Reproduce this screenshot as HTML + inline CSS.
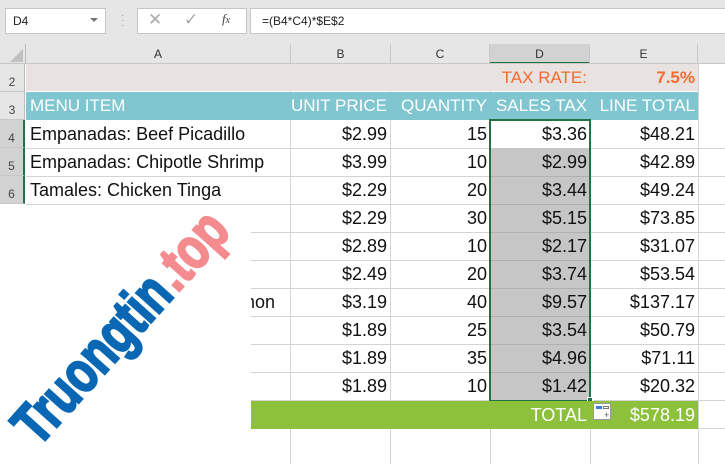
<!DOCTYPE html>
<html><head><meta charset="utf-8"><style>
*{margin:0;padding:0;box-sizing:border-box}
body{width:725px;height:455px;overflow:hidden;background:#fff;font-family:"Liberation Sans",sans-serif;position:relative}
.a{position:absolute}
.c{position:absolute;font-size:18px;line-height:28px;white-space:nowrap;color:#111}
.h{font-size:17px}
.r{text-align:right}
.vl{position:absolute;width:1px;background:#d4d4d4}
.hl{position:absolute;height:1px;background:#d4d4d4}
.rh{position:absolute;left:0;width:25px;background:#e6e6e6;color:#444;font-size:12px;text-align:center;border-bottom:1px solid #c8c8c8;border-right:1px solid #bbb}
.ch{position:absolute;top:44px;height:20px;font-size:12px;color:#333;text-align:center;line-height:20px;border-right:1px solid #c8c8c8;background:#e6e6e6}
</style></head><body>
<div class="a" style="left:0;top:0;width:725px;height:44px;background:#e6e6e6"></div>
<div class="a" style="left:5px;top:8px;width:101px;height:26px;background:#fff;border:1px solid #c6c6c6;font-size:12px;line-height:24px;padding-left:7px;color:#222">D4</div>
<div class="a" style="left:90px;top:18px;width:0;height:0;border-left:4px solid transparent;border-right:4px solid transparent;border-top:4px solid #777"></div>
<div class="a" style="left:121px;top:13px;font-size:10px;color:#999;line-height:5px">·<br>·<br>·</div>
<div class="a" style="left:137px;top:8px;width:110px;height:26px;background:#fff;border:1px solid #c6c6c6"></div>
<div class="a" style="left:148px;top:10px;font-size:17px;color:#aaa">✕</div>
<div class="a" style="left:184px;top:10px;font-size:17px;color:#aaa">✓</div>
<div class="a" style="left:222px;top:11px;font-size:13px;color:#444;font-family:'Liberation Serif',serif;font-style:italic">f<span style="font-size:10px">x</span></div>
<div class="a" style="left:250px;top:8px;width:480px;height:26px;background:#fff;border:1px solid #c6c6c6;font-size:12px;line-height:24px;padding-left:11px;color:#222">=(B4*C4)*$E$2</div>
<div class="a" style="left:0;top:44px;width:26px;height:20px;background:#e6e6e6;border-right:1px solid #bbb"></div>
<div class="a" style="left:10px;top:49px;width:0;height:0;border-left:13px solid transparent;border-bottom:13px solid #c0c0c0"></div>
<div class="ch" style="left:26px;width:265px">A</div>
<div class="ch" style="left:291px;width:100px">B</div>
<div class="ch" style="left:391px;width:99px">C</div>
<div class="ch" style="left:490px;width:100px;background:#d2d2d2;border-bottom:2px solid #217346">D</div>
<div class="ch" style="left:590px;width:108px">E</div>
<div class="ch" style="left:698px;width:30px"></div>
<div class="hl" style="left:0;top:63px;width:725px;background:#c8c8c8"></div>
<div class="vl" style="left:290px;top:64px;height:400px"></div>
<div class="vl" style="left:390px;top:64px;height:400px"></div>
<div class="vl" style="left:490px;top:64px;height:400px"></div>
<div class="vl" style="left:590px;top:64px;height:400px"></div>
<div class="vl" style="left:698px;top:64px;height:400px"></div>
<div class="hl" style="left:26px;top:148px;width:700px"></div>
<div class="hl" style="left:26px;top:176px;width:700px"></div>
<div class="hl" style="left:26px;top:204px;width:700px"></div>
<div class="hl" style="left:26px;top:232px;width:700px"></div>
<div class="hl" style="left:26px;top:260px;width:700px"></div>
<div class="hl" style="left:26px;top:288px;width:700px"></div>
<div class="hl" style="left:26px;top:316px;width:700px"></div>
<div class="hl" style="left:26px;top:344px;width:700px"></div>
<div class="hl" style="left:26px;top:372px;width:700px"></div>
<div class="hl" style="left:26px;top:400px;width:700px"></div>
<div class="hl" style="left:26px;top:428px;width:700px"></div>
<div class="rh" style="top:64px;height:28px;line-height:36px">2</div>
<div class="rh" style="top:92px;height:28px;line-height:36px">3</div>
<div class="rh" style="top:120px;height:28px;line-height:36px;border-right:2px solid #217346;background:#d2d2d2">4</div>
<div class="rh" style="top:148px;height:28px;line-height:36px;border-right:2px solid #217346;background:#d2d2d2">5</div>
<div class="rh" style="top:176px;height:28px;line-height:36px;border-right:2px solid #217346;background:#d2d2d2">6</div>
<div class="a" style="left:26px;top:64px;width:672px;height:27px;background:#e8e3e0"></div>
<div class="c h r" style="left:390px;width:197px;top:64px;color:#f26b2f">TAX RATE:</div>
<div class="c h r" style="left:590px;width:105px;top:64px;color:#f26b2f;font-weight:bold">7.5%</div>
<div class="a" style="left:26px;top:92px;width:672px;height:28px;background:#7fc6d0"></div>
<div class="c h" style="left:30px;top:92px;color:#fff">MENU ITEM</div>
<div class="c h r" style="left:290px;width:97px;top:92px;color:#fff">UNIT PRICE</div>
<div class="c h r" style="left:390px;width:97px;top:92px;color:#fff">QUANTITY</div>
<div class="c h r" style="left:490px;width:97px;top:92px;color:#fff">SALES TAX</div>
<div class="c h r" style="left:590px;width:105px;top:92px;color:#fff">LINE TOTAL</div>
<div class="a" style="left:491px;top:148px;width:98px;height:252px;background:#c6c6c6"></div>
<div class="hl" style="left:491px;top:176px;width:98px;background:#b0b0b0"></div>
<div class="hl" style="left:491px;top:204px;width:98px;background:#b0b0b0"></div>
<div class="hl" style="left:491px;top:232px;width:98px;background:#b0b0b0"></div>
<div class="hl" style="left:491px;top:260px;width:98px;background:#b0b0b0"></div>
<div class="hl" style="left:491px;top:288px;width:98px;background:#b0b0b0"></div>
<div class="hl" style="left:491px;top:316px;width:98px;background:#b0b0b0"></div>
<div class="hl" style="left:491px;top:344px;width:98px;background:#b0b0b0"></div>
<div class="hl" style="left:491px;top:372px;width:98px;background:#b0b0b0"></div>
<div class="a" style="left:489px;top:119px;width:102px;height:283px;border:2px solid #217346"></div>
<div class="a" style="left:587px;top:397px;width:6px;height:6px;background:#217346;border:1px solid #fff"></div>
<div class="c" style="left:30px;top:120px">Empanadas: Beef Picadillo</div>
<div class="c" style="left:30px;top:148px">Empanadas: Chipotle Shrimp</div>
<div class="c" style="left:30px;top:176px">Tamales: Chicken Tinga</div>
<div class="c" style="left:240px;top:288px">mon</div>
<div class="c r" style="left:290px;width:97px;top:120px">$2.99</div>
<div class="c r" style="left:290px;width:97px;top:148px">$3.99</div>
<div class="c r" style="left:290px;width:97px;top:176px">$2.29</div>
<div class="c r" style="left:290px;width:97px;top:204px">$2.29</div>
<div class="c r" style="left:290px;width:97px;top:232px">$2.89</div>
<div class="c r" style="left:290px;width:97px;top:260px">$2.49</div>
<div class="c r" style="left:290px;width:97px;top:288px">$3.19</div>
<div class="c r" style="left:290px;width:97px;top:316px">$1.89</div>
<div class="c r" style="left:290px;width:97px;top:344px">$1.89</div>
<div class="c r" style="left:290px;width:97px;top:372px">$1.89</div>
<div class="c r" style="left:390px;width:97px;top:120px">15</div>
<div class="c r" style="left:390px;width:97px;top:148px">10</div>
<div class="c r" style="left:390px;width:97px;top:176px">20</div>
<div class="c r" style="left:390px;width:97px;top:204px">30</div>
<div class="c r" style="left:390px;width:97px;top:232px">10</div>
<div class="c r" style="left:390px;width:97px;top:260px">20</div>
<div class="c r" style="left:390px;width:97px;top:288px">40</div>
<div class="c r" style="left:390px;width:97px;top:316px">25</div>
<div class="c r" style="left:390px;width:97px;top:344px">35</div>
<div class="c r" style="left:390px;width:97px;top:372px">10</div>
<div class="c r" style="left:490px;width:97px;top:120px">$3.36</div>
<div class="c r" style="left:490px;width:97px;top:148px">$2.99</div>
<div class="c r" style="left:490px;width:97px;top:176px">$3.44</div>
<div class="c r" style="left:490px;width:97px;top:204px">$5.15</div>
<div class="c r" style="left:490px;width:97px;top:232px">$2.17</div>
<div class="c r" style="left:490px;width:97px;top:260px">$3.74</div>
<div class="c r" style="left:490px;width:97px;top:288px">$9.57</div>
<div class="c r" style="left:490px;width:97px;top:316px">$3.54</div>
<div class="c r" style="left:490px;width:97px;top:344px">$4.96</div>
<div class="c r" style="left:490px;width:97px;top:372px">$1.42</div>
<div class="c r" style="left:590px;width:105px;top:120px">$48.21</div>
<div class="c r" style="left:590px;width:105px;top:148px">$42.89</div>
<div class="c r" style="left:590px;width:105px;top:176px">$49.24</div>
<div class="c r" style="left:590px;width:105px;top:204px">$73.85</div>
<div class="c r" style="left:590px;width:105px;top:232px">$31.07</div>
<div class="c r" style="left:590px;width:105px;top:260px">$53.54</div>
<div class="c r" style="left:590px;width:105px;top:288px">$137.17</div>
<div class="c r" style="left:590px;width:105px;top:316px">$50.79</div>
<div class="c r" style="left:590px;width:105px;top:344px">$71.11</div>
<div class="c r" style="left:590px;width:105px;top:372px">$20.32</div>
<div class="a" style="left:26px;top:401px;width:672px;height:28px;background:#8dc13c"></div>
<div class="c r" style="left:490px;width:97px;top:401px;color:#fff">TOTAL</div>
<div class="c r" style="left:590px;width:105px;top:401px;color:#fff">$578.19</div>
<div class="a" style="left:593px;top:403px;width:18px;height:17px;background:#fff;border:1px solid #999"></div>
<div class="a" style="left:596px;top:406px;width:6px;height:3px;background:#3a7be0"></div>
<div class="a" style="left:603px;top:406px;width:6px;height:3px;border:1px solid #777"></div>
<div class="a" style="left:604px;top:411px;font-size:9px;color:#555;line-height:9px">+</div>
<div class="a" style="left:0;top:210px;width:251px;height:245px;background:#fff"></div>
<svg class="a" style="left:0;top:0" width="725" height="455">
<g transform="translate(38,448) rotate(-48)">
<text x="0" y="0" font-family="'Liberation Sans Narrow','Liberation Sans',sans-serif" font-weight="bold" font-size="58" fill="#0a67b4" stroke="#0a67b4" stroke-width="2.5" textLength="205" lengthAdjust="spacingAndGlyphs">Truongtin</text>
<text x="208" y="0" font-family="'Liberation Sans Narrow','Liberation Sans',sans-serif" font-weight="bold" font-size="58" fill="#f48b8e" stroke="#f48b8e" stroke-width="2.5" textLength="82" lengthAdjust="spacingAndGlyphs">.top</text>
</g>
</svg>
</body></html>
